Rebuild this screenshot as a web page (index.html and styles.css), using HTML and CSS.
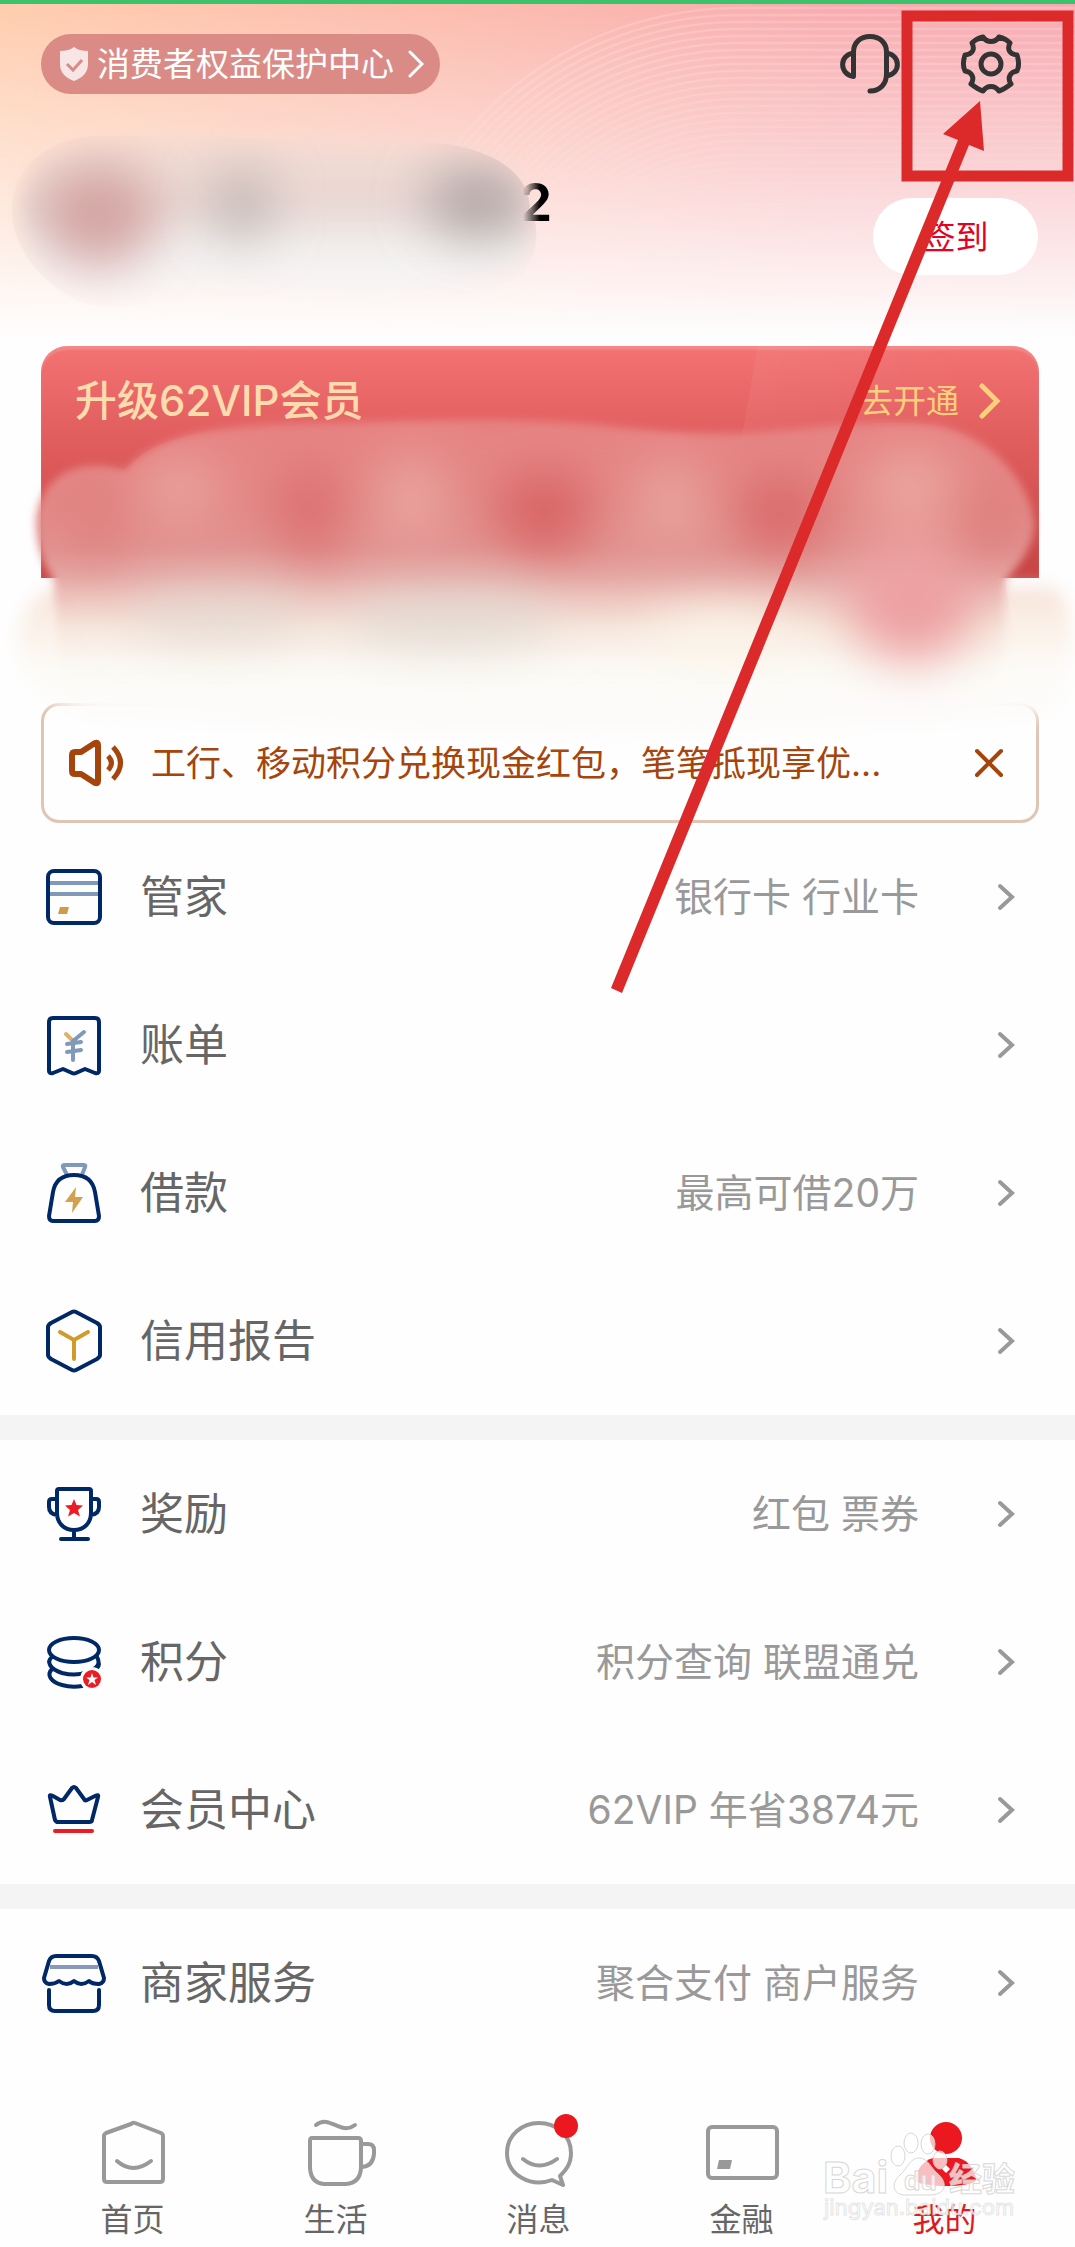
FILE: index.html
```html
<!DOCTYPE html>
<html lang="zh-CN">
<head>
<meta charset="utf-8">
<meta name="viewport" content="width=device-width, initial-scale=1">
<title>我的</title>
<link rel="stylesheet" href="styles.css">
</head>
<body>
<div class="app">
  <header class="header">
    <div class="rings" aria-hidden="true"></div>
    <div class="topbar">
      <a class="shield-link" href="#protection">
        <svg width="30" height="36" viewBox="0 0 30 36" aria-hidden="true">
          <path d="M15 1C19 4 24 5 29 5V18C29 27 23 32 15 35C7 32 1 27 1 18V5C6 5 11 4 15 1Z" fill="#f8e6e6"/>
          <path d="M8 18L14 24L23 14" fill="none" stroke="#db8b86" stroke-width="3"/>
        </svg>
        <span>消费者权益保护中心</span>
        <svg class="shield-arrow" width="16" height="28" viewBox="0 0 16 28" aria-hidden="true"><path d="M2 2L14 14L2 26" fill="none" stroke="#fff" stroke-width="3" stroke-linecap="round"/></svg>
      </a>
      <div class="tools">
        <button class="tool" type="button" aria-label="客服">
          <svg width="60" height="60" viewBox="0 0 60 60" fill="none" stroke="#333" stroke-width="5" stroke-linecap="round" stroke-linejoin="round"><path d="M13.500 42V18C13.500 9 20 2.500 30 2.500S46.500 9 46.500 18V40C46.500 50 40 57 30 57M13.500 19C-1 21 -1 40 13.500 42.500M46.500 19C61 21 61 40 46.500 42"/></svg>
        </button>
        <button class="tool" type="button" aria-label="设置">
          <svg width="60" height="60" viewBox="0 0 60 60" fill="none" stroke="#333" stroke-width="5" stroke-linejoin="round"><path d="M22 3C18 4 14 6 11 9C14 15 12 20 4 21C2 27 2 33 4 37C11 38 14 44 10 50C14 53 18 56 22 57C26 51 34 51 38 57C42 56 46 53 50 50C46 44 49 38 56 37C58 33 58 27 56 21C48 20 46 15 49 9C46 6 42 4 38 3C34 9 26 9 22 3Z"/><circle cx="30" cy="30" r="10"/></svg>
        </button>
      </div>
    </div>
    <div class="profile">
      <svg class="profile-blur" viewBox="0 0 560 200" aria-hidden="true">
        <defs>
          <filter id="soft" x="-50%" y="-50%" width="200%" height="200%"><feGaussianBlur stdDeviation="10"/></filter>
          <filter id="softer" x="-100%" y="-100%" width="300%" height="300%"><feGaussianBlur stdDeviation="26"/></filter>
          <linearGradient id="haze" x1="0" y1="0" x2="0" y2="1"><stop offset="0" stop-color="#f4dbd3"/><stop offset=".4" stop-color="#e8d7d3"/><stop offset=".7" stop-color="#f1efee"/><stop offset=".9" stop-color="#f7f4f4"/><stop offset="1" stop-color="#fcf6f6"/></linearGradient>
          <clipPath id="hazeClip"><path d="M90 20C160 18 330 24 450 28C510 40 530 66 530 94C542 110 536 148 520 160C460 190 380 200 250 184C190 178 140 194 95 190C50 180 10 134 12 92C14 50 48 24 90 20Z"/></clipPath>
        </defs>
        <path filter="url(#soft)" fill="url(#haze)" d="M90 28C160 22 330 28 450 32C505 44 522 70 522 96C532 112 528 140 512 152C460 182 380 188 250 172C190 165 140 184 95 180C50 166 22 130 22 92C24 56 48 34 90 28Z"/>
        <g clip-path="url(#hazeClip)">
          <ellipse filter="url(#softer)" cx="98" cy="100" rx="58" ry="50" fill="#cf9a98" fill-opacity=".85"/>
          <ellipse filter="url(#softer)" cx="242" cy="88" rx="28" ry="36" fill="#b9b0ac" fill-opacity=".9"/>
          <ellipse filter="url(#softer)" cx="478" cy="86" rx="52" ry="34" fill="#a99e9e" fill-opacity=".9"/>
        </g>
      </svg>
      <p class="name">2</p>
      <button class="sign" type="button">签到</button>
    </div>
  </header>

  <section class="promo">
    <a class="vip" href="#vip">
      <h2 class="vip-title">升级62VIP会员</h2>
      <span class="vip-open">去开通</span>
      <svg width="22" height="36" viewBox="0 0 22 36" aria-hidden="true"><path d="M3 3L18 18L3 33" fill="none" stroke="#ffd07c" stroke-width="5" stroke-linecap="round"/></svg>
    </a>
    <svg class="promo-blur" viewBox="0 0 1075 340" preserveAspectRatio="none" aria-hidden="true">
      <defs>
        <filter id="edge" x="-10%" y="-10%" width="120%" height="120%"><feGaussianBlur stdDeviation="4"/></filter>
        <filter id="edgeWide" x="-10%" y="-20%" width="120%" height="140%"><feGaussianBlur stdDeviation="9"/></filter>
        <filter id="patch" x="-40%" y="-60%" width="180%" height="220%"><feGaussianBlur stdDeviation="25"/></filter>
        <linearGradient id="rose" gradientUnits="userSpaceOnUse" x1="0" y1="20" x2="0" y2="300"><stop offset="0" stop-color="#e78383"/><stop offset=".3" stop-color="#e28886"/><stop offset=".46" stop-color="#e19290"/><stop offset=".56" stop-color="#e5a8a4"/><stop offset=".66" stop-color="#efcdc5"/><stop offset=".75" stop-color="#f7e8de"/><stop offset=".87" stop-color="#fbf8f2"/><stop offset="1" stop-color="#fdfdfa"/></linearGradient>
        <linearGradient id="cream" gradientUnits="userSpaceOnUse" x1="0" y1="170" x2="0" y2="330"><stop offset="0" stop-color="#f3d8d0"/><stop offset=".3" stop-color="#faeee4"/><stop offset=".65" stop-color="#fdfcf9"/><stop offset="1" stop-color="#fdfbfa"/></linearGradient>
        <clipPath id="roseClip"><path d="M125 70C160 30 230 24 330 23C430 20 520 18 590 24C650 30 700 36 760 32C830 26 890 18 940 26C1000 40 1032 90 1034 126C1032 150 1018 165 1005 180L1030 340H20L54 180C40 160 36 140 36 120C40 85 65 55 125 70Z"/></clipPath>
      </defs>
      <path filter="url(#edgeWide)" fill="url(#cream)" d="M56 188H1054C1078 204 1080 280 1052 312C980 326 800 328 690 332C520 340 260 326 110 318C50 316 18 280 18 240C20 210 36 196 56 188Z"/>
      <path filter="url(#edge)" fill="url(#rose)" d="M125 70C160 30 230 24 330 23C430 20 520 18 590 24C650 30 700 36 760 32C830 26 890 18 940 26C1000 40 1032 90 1034 126C1032 150 1018 165 1005 180L1000 290H60L54 180C40 160 36 140 36 120C40 85 65 55 125 70Z"/>
      <g clip-path="url(#roseClip)"><g filter="url(#patch)">
        <ellipse cx="180" cy="90" rx="40" ry="30" fill="#eaa5a0"/>
        <ellipse cx="412" cy="100" rx="34" ry="44" fill="#e9a6a0"/>
        <ellipse cx="670" cy="104" rx="34" ry="44" fill="#e8a49f"/>
        <ellipse cx="910" cy="88" rx="46" ry="40" fill="#eba59f"/>
        <ellipse cx="310" cy="110" rx="32" ry="46" fill="#db6f6f"/>
        <ellipse cx="544" cy="112" rx="46" ry="40" fill="#d86464"/>
        <ellipse cx="780" cy="114" rx="42" ry="36" fill="#d96868"/>
        <ellipse cx="986" cy="125" rx="20" ry="36" fill="#dc7673"/>
        <ellipse cx="98" cy="120" rx="24" ry="36" fill="#df7e7c"/>
        <ellipse cx="220" cy="214" rx="90" ry="26" fill="#e2dad3" fill-opacity=".8"/>
        <ellipse cx="450" cy="218" rx="110" ry="28" fill="#dedad3" fill-opacity=".8"/>
        <ellipse cx="912" cy="200" rx="64" ry="60" fill="#eda0a2"/>
        <ellipse cx="720" cy="236" rx="70" ry="22" fill="#fdf6ea"/>
      </g></g>
    </svg>
  </section>

  <div class="notice">
    <svg width="58" height="48" viewBox="0 0 58 48" fill="none" stroke="#a5440b" stroke-width="5" stroke-linejoin="round" aria-hidden="true"><path d="M5 16Q5 13 8 13H14L28 4Q31 3 31 6V42Q31 45 28 44L14 35H8Q5 35 5 32Z" stroke-width="6"/><path d="M41 17Q48 24 41 31M46 8Q61 24 46 40"/></svg>
    <p class="notice-text">工行、移动积分兑换现金红包，笔笔抵现享优...</p>
    <button class="close" type="button" aria-label="关闭">
      <svg width="30" height="30" viewBox="0 0 30 30"><path d="M3 3L27 27M27 3L3 27" stroke="#a5440b" stroke-width="4" stroke-linecap="round"/></svg>
    </button>
  </div>

  <main class="menus">
    <nav class="menu">
      <a class="row" href="#cards">
        <svg class="row-icon" viewBox="0 0 64 64" aria-hidden="true"><path d="M7 18H57M7 29H57" stroke="#7f99ba" stroke-width="4"/><path d="M18 42H27L25 49H16Z" fill="#cf9c45"/><rect class="navy" x="6" y="6" width="52" height="52" rx="6"/></svg>
        <span class="row-label">管家</span><span class="row-value">银行卡 行业卡</span>
        <svg class="row-arrow" viewBox="0 0 18 28" aria-hidden="true"><path d="M3 3L15 14L3 25"/></svg>
      </a>
      <a class="row" href="#bills">
        <svg class="row-icon" viewBox="0 0 64 64" aria-hidden="true"><path class="navy" d="M7 9Q7 5 11 5H53Q57 5 57 9V58Q57 61 53 60L43 56L34 60Q32 61 30 60L21 56L11 60Q7 61 7 58Z"/><path d="M24 21L31 28" stroke="#dfb070" stroke-width="4" stroke-linecap="round"/><path d="M42 19L31 28V47M25 31L39 29M25 39L39 37" fill="none" stroke="#7f99ba" stroke-width="4" stroke-linecap="round" stroke-linejoin="round"/></svg>
        <span class="row-label">账单</span><span class="row-value"></span>
        <svg class="row-arrow" viewBox="0 0 18 28" aria-hidden="true"><path d="M3 3L15 14L3 25"/></svg>
      </a>
      <a class="row" href="#loans">
        <svg class="row-icon" viewBox="0 0 64 64" aria-hidden="true"><path d="M25 14L21 6Q20 4 23 4H42Q44 4 43 6L40 14" fill="none" stroke="#7f99ba" stroke-width="4"/><path class="navy" d="M32 14C44 14 51 20 53 31L57 55Q57 60 53 60H11Q7 60 7 55L11 31C13 20 20 14 32 14Z"/><path d="M34 26L23 41H31L30 52L41 36H33Z" fill="#d3a04c"/></svg>
        <span class="row-label">借款</span><span class="row-value">最高可借20万</span>
        <svg class="row-arrow" viewBox="0 0 18 28" aria-hidden="true"><path d="M3 3L15 14L3 25"/></svg>
      </a>
      <a class="row" href="#credit">
        <svg class="row-icon" viewBox="0 0 64 64" aria-hidden="true"><path class="navy" d="M30 3Q32 2 34 3L55 14Q58 16 58 18V46Q58 48 55 50L34 61Q32 62 30 61L9 50Q6 48 6 46V18Q6 16 9 14Z"/><path d="M18 23L32 31L46 23M32 31V50" fill="none" stroke="#d09a2c" stroke-width="4" stroke-linecap="round"/></svg>
        <span class="row-label">信用报告</span><span class="row-value"></span>
        <svg class="row-arrow" viewBox="0 0 18 28" aria-hidden="true"><path d="M3 3L15 14L3 25"/></svg>
      </a>
    </nav>
    <nav class="menu">
      <a class="row" href="#rewards">
        <svg class="row-icon" viewBox="0 0 64 64" aria-hidden="true"><path class="navy" d="M17 7H47Q49 7 49 9V31C49 41 42 48 32 48S15 41 15 31V9Q15 7 17 7ZM32 48V57M19 57H46M15 17H10Q7 17 7 20V25Q7 32 15 33M49 17H54Q57 17 57 20V25Q57 32 49 33"/><path fill="#ec1c24" d="M32 17L34.500 23L41 23.500L36 28L38 34.500L32 31L26 34.500L28 28L23 23.500L29.500 23Z"/></svg>
        <span class="row-label">奖励</span><span class="row-value">红包 票券</span>
        <svg class="row-arrow" viewBox="0 0 18 28" aria-hidden="true"><path d="M3 3L15 14L3 25"/></svg>
      </a>
      <a class="row" href="#points">
        <svg class="row-icon" viewBox="0 0 64 64" aria-hidden="true"><g class="navy"><ellipse cx="32" cy="20" rx="25" ry="12"/><path d="M10 27C4 32 8 39 20 43C28 45 38 45 45 42C55 39 59 34 55 27M10 39C4 45 9 52 20 55C27 57 34 57 40 56M55 38Q57 36 57 34"/></g><circle cx="50" cy="49" r="12" fill="#fff"/><circle cx="50" cy="49" r="9" fill="#ec1c24"/><path fill="#fff" d="M50 43L51.500 47.500H56L52.500 50L54 55L50 52L46 55L47.500 50L44 47.500H48.500Z"/></svg>
        <span class="row-label">积分</span><span class="row-value">积分查询 联盟通兑</span>
        <svg class="row-arrow" viewBox="0 0 18 28" aria-hidden="true"><path d="M3 3L15 14L3 25"/></svg>
      </a>
      <a class="row" href="#member">
        <svg class="row-icon" viewBox="0 0 64 64" aria-hidden="true"><path class="navy" d="M8 19Q7 16 11 18L18 22Q20 23 22 21L30 10Q32 8 34 10L42 21Q43 23 45 22L53 18Q57 16 56 19L50 42Q50 44 47 44H16Q14 44 13 42Z"/><path d="M13 53H50" stroke="#ec1c24" stroke-width="4" stroke-linecap="round"/></svg>
        <span class="row-label">会员中心</span><span class="row-value">62VIP 年省3874元</span>
        <svg class="row-arrow" viewBox="0 0 18 28" aria-hidden="true"><path d="M3 3L15 14L3 25"/></svg>
      </a>
    </nav>
    <nav class="menu">
      <a class="row" href="#merchant">
        <svg class="row-icon" viewBox="0 0 64 64" aria-hidden="true"><path d="M8 16H56" stroke="#8799ba" stroke-width="4"/><path class="navy" d="M14 5H50Q55 5 57 10L62 27Q62 32 57 33Q50 33 47 30Q39 36 32 30Q25 36 17 30Q13 33 7 33Q2 32 2 27L7 10Q9 5 14 5ZM7 39V54Q7 60 13 60H51Q57 60 57 54V39"/></svg>
        <span class="row-label">商家服务</span><span class="row-value">聚合支付 商户服务</span>
        <svg class="row-arrow" viewBox="0 0 18 28" aria-hidden="true"><path d="M3 3L15 14L3 25"/></svg>
      </a>
    </nav>
  </main>

  <nav class="tabs">
    <a class="tab" href="#home">
      <svg viewBox="0 0 72 72" aria-hidden="true"><path d="M34 6Q36 4 38 5L64 15Q66 16 66 18V61Q66 64 63 64H10Q7 64 7 61V18Q7 16 9 15ZM20 43Q36 57 54 43"/></svg>
      <span>首页</span>
    </a>
    <a class="tab" href="#life">
      <svg viewBox="0 0 72 72" aria-hidden="true"><path d="M12 20H58Q61 20 61 23V50Q60 65 46 66H24Q11 65 10 50V23Q10 20 12 20ZM61 26H68Q74 26 74 32V36Q73 48 62 49M16 7C30 -4 40 18 55 7"/></svg>
      <span>生活</span>
    </a>
    <a class="tab" href="#messages">
      <svg viewBox="0 0 72 72" aria-hidden="true"><path d="M49 62C28 70 4 57 4 35C4 17 19 5 36 5S68 17 68 35C68 46 63 52 57 58L60 67ZM20 41Q36 54 54 41"/><circle cx="63" cy="8" r="12" class="dot"/></svg>
      <span>消息</span>
    </a>
    <a class="tab" href="#finance">
      <svg viewBox="0 0 72 72" aria-hidden="true"><rect x="2" y="9" width="69" height="51" rx="4"/><path d="M13 42H26L24 51H11Z" class="chip"/></svg>
      <span>金融</span>
    </a>
    <a class="tab active" href="#mine" aria-current="page">
      <svg viewBox="0 0 72 72" aria-hidden="true"><circle cx="37" cy="20" r="16" class="dot"/><path class="dot" d="M24 40H50C60 43 66 52 67 62C66 66 50 68 37 68S7 66 6 62C8 51 14 43 24 40Z"/><path class="cut" d="M37 47L41 51L37 55L33 51Z"/></svg>
      <span>我的</span>
    </a>
  </nav>

  <svg class="watermark" width="200" height="100" viewBox="0 0 200 100" aria-hidden="true">
    <g fill="#fff" fill-opacity=".72" stroke="#d0d0d0" stroke-opacity=".85">
      <text x="0" y="63" font-size="43" font-weight="700">Bai</text>
      <ellipse cx="75" cy="26" rx="7" ry="10"/><ellipse cx="88" cy="13" rx="7" ry="10"/><ellipse cx="105" cy="14" rx="7" ry="10"/><ellipse cx="117" cy="30" rx="7" ry="9"/>
      <path d="M96 28C105 28 108 38 114 43C125 52 124 64 108 65H84C70 66 67 54 77 45C85 38 87 28 96 28Z"/>
      <text x="81" y="60" font-size="26" font-weight="700">du</text>
      <text x="126" y="61" font-size="33" font-weight="700">经验</text>
    </g>
    <text x="1" y="85" font-size="22" fill="#fff" fill-opacity=".8" stroke="#d4d4d4" stroke-opacity=".6">jingyan.baidu.com</text>
  </svg>

  <svg class="callout" width="474" height="1000" viewBox="0 0 474 1000" aria-hidden="true">
    <rect x="306" y="16" width="161" height="160" fill="none" stroke="#dc2a2b" stroke-width="11"/>
    <path d="M379 101L383 151L368 145L21 993L10 988L357 140L342 134Z" fill="#dc2a2b"/>
  </svg>
</div>
</body>
</html>
```

FILE: styles.css
```css
* { box-sizing: border-box; }

body {
  margin: 0;
  background: #fefefe;
  color: #666;
  font-family: Inter, "Noto Sans CJK SC", sans-serif;
}

a { color: inherit; text-decoration: none; }
p, h2 { margin: 0; }

button {
  padding: 0;
  border: 0;
  background: none;
  font: inherit;
  cursor: pointer;
}

svg { display: block; flex: none; }

.app { position: relative; overflow: hidden; }

/* Header */
.header {
  position: relative;
  border-top: 4px solid #3bc26a;
  background:
    linear-gradient(180deg, rgba(254, 254, 254, 0) 0, rgba(254, 254, 254, .45) 45%, #fefefe 98%),
    linear-gradient(97deg, #ffcdae 0, #fbb8ae 50%, #f8abae 75%, #f7a9b0 100%);
}

.rings {
  position: absolute;
  top: 0;
  right: 0;
  width: 640px;
  height: 260px;
  -webkit-mask-image: linear-gradient(#000 20%, transparent 90%);
  mask-image: linear-gradient(#000 20%, transparent 90%);
}

.rings::before,
.rings::after {
  content: "";
  position: absolute;
  top: 0;
  bottom: 0;
}

.rings::before {
  left: 0;
  width: 304px;
  background: repeating-radial-gradient(circle at 304px 366px, transparent 0, transparent 3px, rgba(255, 255, 255, .22) 5px, transparent 7px);
  -webkit-mask-image: radial-gradient(circle at 304px 366px, #000 363px, transparent 364px);
  mask-image: radial-gradient(circle at 304px 366px, #000 363px, transparent 364px);
}

.rings::after {
  left: 304px;
  right: 0;
  background: repeating-linear-gradient(0deg, transparent 0, transparent 3px, rgba(255, 255, 255, .22) 5px, transparent 7px) 0 1px;
}

.topbar {
  position: relative;
  display: flex;
  justify-content: space-between;
  align-items: center;
  padding: 30px 54px 0 41px;
}

.shield-link {
  display: flex;
  align-items: center;
  gap: 8px;
  height: 60px;
  padding: 0 16px 0 18px;
  border-radius: 30px;
  background: #db8b86;
  color: #fff;
  font-size: 33px;
  line-height: 48px;
}

.shield-arrow { margin-left: 6px; }
.tools { display: flex; gap: 61px; }
.tool svg { overflow: visible; }

.profile {
  position: relative;
  display: flex;
  justify-content: space-between;
  padding: 79px 37px 71px 0;
}

.profile-blur {
  position: absolute;
  left: 0;
  top: 22px;
  width: 560px;
  height: 200px;
  overflow: visible;
}

.name {
  position: relative;
  width: 552px;
  text-align: right;
  font-size: 52px;
  font-weight: 700;
  line-height: 60px;
  background: linear-gradient(90deg, transparent 523px, #000 540px);
  -webkit-background-clip: text;
  background-clip: text;
  color: transparent;
}

.sign {
  width: 165px;
  height: 77px;
  margin-top: 25px;
  border-radius: 39px;
  background: #fff;
  color: #e60021;
  font-size: 33px;
  line-height: 48px;
}

/* Membership card and offer area */
.promo {
  position: relative;
  min-height: 357px;
  padding: 0 36px 0 41px;
}

.vip {
  display: flex;
  align-items: flex-start;
  height: 232px;
  padding: 37px 38px 0 34px;
  border-radius: 26px 26px 0 0;
  background:
    linear-gradient(100deg, transparent 69%, rgba(255, 255, 255, .05) 69%, transparent 90%),
    linear-gradient(180deg, #f37272 0, #e36061 35%, #c84343 100%);
  box-shadow: inset 0 4px 2px rgba(255, 255, 255, .15);
}

.vip-title {
  flex: 1;
  color: #ffdcae;
  font-size: 42px;
  font-weight: 500;
  line-height: 36px;
}

.vip-open {
  margin-right: 20px;
  color: #ffd07c;
  font-size: 33px;
  line-height: 36px;
}

.promo-blur {
  position: absolute;
  z-index: 1;
  left: 0;
  top: 54px;
  width: 100%;
  height: 340px;
  overflow: visible;
}

/* Notice */
.notice {
  display: flex;
  align-items: center;
  height: 120px;
  margin: 0 36px 0 41px;
  padding: 0 32px 0 23px;
  border: 3px solid #e0c5b5;
  border-radius: 18px;
  color: #a5440b;
}

.notice-text {
  flex: 1;
  margin-left: 26px;
  font-size: 35px;
  line-height: 50px;
}

/* Menu rows */
.menus {
  display: flex;
  flex-direction: column;
  gap: 25px;
  background: #f4f4f4;
}

.menu { background: #fefefe; }

.row {
  display: flex;
  align-items: center;
  height: 148px;
  padding: 0 60px 0 42px;
}

.row-icon { width: 64px; height: 64px; }

.navy {
  fill: none;
  stroke: #002766;
  stroke-width: 4;
  stroke-linecap: round;
  stroke-linejoin: round;
}

.row-label {
  margin-left: 34px;
  font-size: 44px;
  line-height: 60px;
}

.row-value {
  flex: 1;
  margin-right: 78px;
  color: #999;
  text-align: right;
  font-size: 39px;
  line-height: 56px;
}

.row-arrow {
  width: 18px;
  height: 28px;
  fill: none;
  stroke: #999;
  stroke-width: 4;
  stroke-linecap: round;
}

/* Tab bar */
.tabs {
  display: grid;
  grid-template-columns: repeat(5, 1fr);
  padding: 61px 29px 8px 31px;
}

.tab {
  display: flex;
  flex-direction: column;
  align-items: center;
  gap: 10px;
  font-size: 32px;
  line-height: 40px;
}

.tab svg {
  width: 72px;
  height: 72px;
  overflow: visible;
  fill: none;
  stroke: #999;
  stroke-width: 4;
  stroke-linecap: round;
  stroke-linejoin: round;
}

.tab .dot { fill: #ec1820; stroke: none; }
.tab .chip { fill: #999; stroke: none; }
.tab .cut { fill: #fff; stroke: none; }
.tab.active { color: #dc1a20; }

/* Overlays */
.watermark {
  position: absolute;
  right: 52px;
  bottom: 18px;
  pointer-events: none;
}

.callout {
  position: absolute;
  z-index: 2;
  top: 0;
  right: 0;
  pointer-events: none;
}
```
